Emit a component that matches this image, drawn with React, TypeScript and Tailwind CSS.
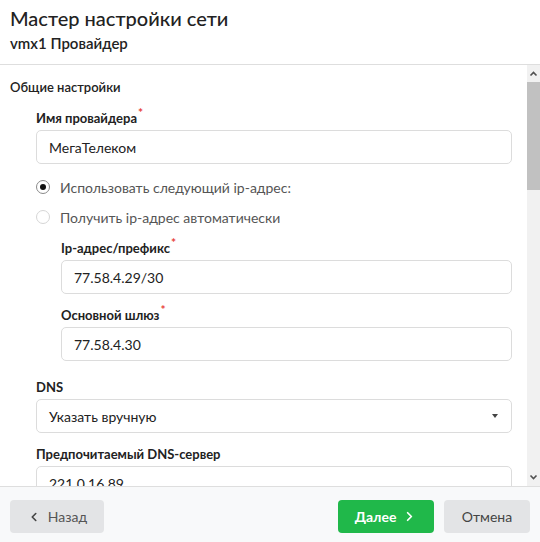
import { ChevronLeft, ChevronRight } from 'lucide-react'

function Label({ text, required }: { text: string; required?: boolean }) {
  return (
    <div className="h-[18px] text-[13px] leading-[18px] font-bold text-[#222] mb-[3px] flex items-start">
      {text}
      {required && <span className="text-[#e8403a] text-[12px] leading-[12px] ml-[1px] -mt-[2px]">*</span>}
    </div>
  )
}

function Input({ value }: { value: string }) {
  return (
    <div className="h-[34px] border border-[#dcdcdc] rounded-[5px] bg-white px-[12px] flex items-center text-[14px] text-[#222]">
      {value}
    </div>
  )
}

function Radio({ checked, text }: { checked?: boolean; text: string }) {
  return (
    <div className="flex items-center h-[30px]">
      <span
        className={
          checked
            ? 'w-[14px] h-[14px] rounded-full border border-[#8a8a8a] flex items-center justify-center'
            : 'w-[14px] h-[14px] rounded-full border border-[#d6d6d6]'
        }
      >
        {checked && <span className="w-[6px] h-[6px] rounded-full bg-[#111]" />}
      </span>
      <span className="ml-[10px] text-[14px] text-[#555]">{text}</span>
    </div>
  )
}

export default function App() {
  return (
    <div className="w-[540px] h-[542px] bg-white flex flex-col overflow-hidden font-['Lato','Noto_Sans',sans-serif]">
      <div className="h-[65px] shrink-0 border-b border-[#dedede] px-[10px] pt-[5px]">
        <div className="text-[20px] leading-[26px] font-medium text-[#222]">Мастер настройки сети</div>
        <div className="text-[15px] leading-[20px] font-semibold text-[#222] mt-[2px]">vmx1 Провайдер</div>
      </div>

      <div className="flex-1 flex min-h-0">
        <div className="flex-1 overflow-hidden">
          <div className="px-[10px] pt-[14px] text-[13px] leading-[16px] font-semibold text-[#222]">Общие настройки</div>
          <div className="pl-[36px] pr-[15px] pt-[14px]">
            <Label text="Имя провайдера" required />
            <Input value="МегаТелеком" />
            <div className="mt-[8px]">
              <Radio checked text="Использовать следующий ip-адрес:" />
              <Radio text="Получить ip-адрес автоматически" />
            </div>
            <div className="pl-[25px] mt-[7px]">
              <Label text="Ip-адрес/префикс" required />
              <Input value="77.58.4.29/30" />
              <div className="mt-[12px]">
                <Label text="Основной шлюз" required />
                <Input value="77.58.4.30" />
              </div>
            </div>
            <div className="mt-[17px]">
              <Label text="DNS" />
              <div className="h-[34px] border border-[#dcdcdc] rounded-[5px] bg-white pl-[12px] pr-[13px] flex items-center justify-between text-[14px] text-[#222]">
                <span>Указать вручную</span>
                <span className="w-0 h-0 border-l-[3px] border-r-[3px] border-t-[4px] border-l-transparent border-r-transparent border-t-[#444]" />
              </div>
            </div>
            <div className="mt-[12px]">
              <Label text="Предпочитаемый DNS-сервер" />
              <div className="mt-[2px]">
                <Input value="221.0.16.89" />
              </div>
            </div>
          </div>
        </div>
        <div className="w-[13px] bg-[#f1f1f1] flex flex-col items-center">
          <svg width="9" height="17" viewBox="0 0 9 17" className="shrink-0">
            <path d="M1.5 10.5 L4.5 7.5 L7.5 10.5" stroke="#505050" strokeWidth="1.6" fill="none" />
          </svg>
          <div className="w-full h-[108px] bg-[#c1c1c1]" />
          <div className="flex-1" />
          <svg width="9" height="17" viewBox="0 0 9 17" className="shrink-0">
            <path d="M1.5 6.5 L4.5 9.5 L7.5 6.5" stroke="#505050" strokeWidth="1.6" fill="none" />
          </svg>
        </div>
      </div>

      <div className="h-[56px] shrink-0 border-t border-[#dedede] bg-[#f8f9fa] flex items-start pt-[13px] px-[10px]">
        <button className="w-[94px] h-[33px] rounded-[4px] bg-[#e3e4e6] text-[#555] text-[14px] flex items-center justify-center gap-[7px]">
          <ChevronLeft size={14} strokeWidth={2.8} className="text-[#444]" />
          <span>Назад</span>
        </button>
        <div className="flex-1" />
        <button className="w-[96px] h-[33px] rounded-[4px] bg-[#20b84a] text-white text-[14px] font-bold flex items-center justify-center gap-[6px]">
          <span>Далее</span>
          <ChevronRight size={15} strokeWidth={2.8} />
        </button>
        <button className="ml-[10px] w-[86px] h-[33px] rounded-[4px] bg-[#e3e4e6] text-[#444] text-[14px] flex items-center justify-center">
          Отмена
        </button>
      </div>
    </div>
  )
}
